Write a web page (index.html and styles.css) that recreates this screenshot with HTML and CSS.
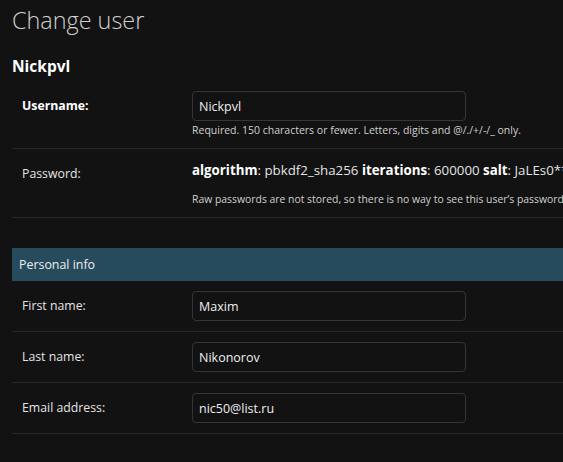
FILE: index.html
```html
<!DOCTYPE html>
<html lang="en">
<head>
<meta charset="utf-8">
<title>Change user</title>
<link rel="stylesheet" href="styles.css">
</head>
<body>
<div class="content">
  <h1 class="title">Change user</h1>
  <h2 class="subtitle">Nickpvl</h2>

  <fieldset class="module">
    <div class="form-row">
      <label class="label required" for="id_username">Username:</label>
      <div class="field">
        <input class="text-input" id="id_username" type="text" value="Nickpvl">
        <div class="help">Required. 150 characters or fewer. Letters, digits and @/./+/-/_ only.</div>
      </div>
    </div>
    <div class="form-row">
      <label class="label">Password:</label>
      <div class="field">
        <div class="readonly"><strong>algorithm</strong>: pbkdf2_sha256 <strong>iterations</strong>: 600000 <strong>salt</strong>: JaLEs0******</div>
        <div class="help help-gap">Raw passwords are not stored, so there is no way to see this user’s password,</div>
      </div>
    </div>
  </fieldset>

  <fieldset class="module">
    <h2 class="module-title">Personal info</h2>
    <div class="form-row">
      <label class="label" for="id_first_name">First name:</label>
      <div class="field"><input class="text-input" id="id_first_name" type="text" value="Maxim"></div>
    </div>
    <div class="form-row">
      <label class="label" for="id_last_name">Last name:</label>
      <div class="field"><input class="text-input" id="id_last_name" type="text" value="Nikonorov"></div>
    </div>
    <div class="form-row">
      <label class="label" for="id_email">Email address:</label>
      <div class="field"><input class="text-input" id="id_email" type="text" value="nic50@list.ru"></div>
    </div>
  </fieldset>
</div>
</body>
</html>
```

FILE: styles.css
```css
html, body {
  margin: 0;
  padding: 0;
  background: #121212;
  overflow: hidden;
}

body {
  font-family: "Open Sans", "Noto Sans", sans-serif;
  color: #eeeeee;
  width: 563px;
  height: 462px;
}

.content {
  padding-left: 12px;
  width: 640px;
}

.title {
  margin: 0;
  padding-top: 6px;
  font-size: 23.4px;
  line-height: 28px;
  font-weight: 300;
  color: #d0d0d0;
}

.subtitle {
  margin: 0;
  padding-top: 21px;
  font-size: 15.5px;
  line-height: 22px;
  font-weight: 700;
  color: #ffffff;
  height: 26px;
}

.module {
  margin: 0 0 30px 0;
  padding: 0;
  border: 0;
  min-width: 0;
}

.module-title {
  margin: 0;
  height: 33px;
  padding-left: 7px;
  background: #264b5d;
  font-size: 12.4px;
  line-height: 33px;
  font-weight: 400;
  color: #eeeeee;
}

.form-row {
  display: flex;
  padding: 10px;
  border-bottom: 1px solid #272727;
}

.label {
  flex: 0 0 160px;
  padding: 4px 10px 0 0;
  font-size: 12.3px;
  line-height: 22px;
  color: #e4e4e4;
}

.label.required {
  font-weight: 700;
  color: #ffffff;
}

.field {
  flex: 1;
  min-width: 0;
}

.text-input {
  display: block;
  box-sizing: border-box;
  width: 274px;
  height: 30px;
  margin: 0;
  padding: 0 6px;
  border: 1px solid #353535;
  border-radius: 4px;
  background: #121212;
  color: #eeeeee;
  font-family: inherit;
  font-size: 12.5px;
}

.help {
  margin-top: 2px;
  font-size: 10.5px;
  line-height: 15px;
  color: #d0d0d0;
  white-space: nowrap;
}

.help-gap {
  margin-top: 11px;
  font-size: 10.4px;
}

.readonly {
  font-size: 13.3px;
  line-height: 22px;
  color: #e4e4e4;
  white-space: nowrap;
}

.readonly strong {
  color: #ffffff;
}
```
